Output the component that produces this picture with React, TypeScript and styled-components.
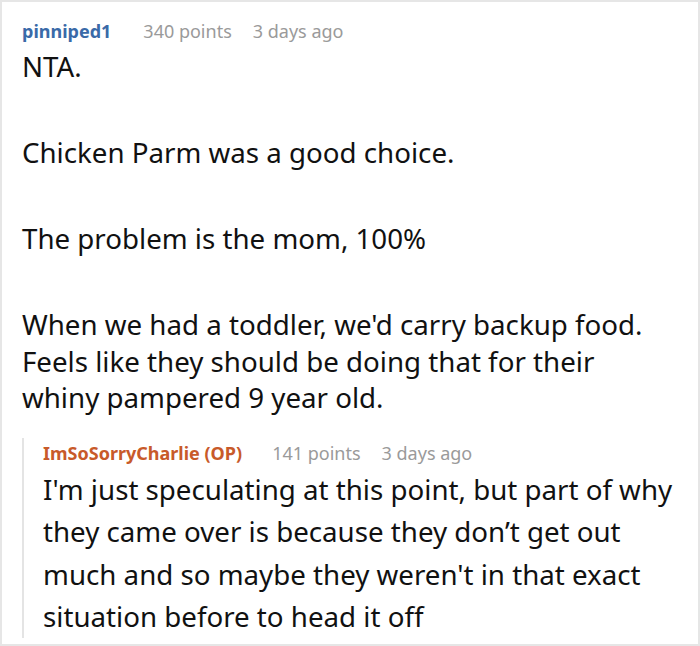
import styled, { createGlobalStyle } from 'styled-components'

const GlobalStyle = createGlobalStyle`
  html, body {
    margin: 0;
    padding: 0;
    background: #fff;
  }
`

const Frame = styled.div`
  box-sizing: border-box;
  width: 700px;
  height: 646px;
  border: 2px solid #e6e6e6;
  overflow: hidden;
  padding: 14px 14px 0 20px;
  font-family: 'Noto Sans', 'Open Sans', sans-serif;
  color: #111;
`

const Meta = styled.div`
  display: flex;
  align-items: baseline;
  font-size: 18px;
  line-height: 30px;
`

const Author = styled.span<{ $op?: boolean }>`
  font-weight: 700;
  margin-right: ${(p) => (p.$op ? 30 : 32)}px;
  color: ${(p) => (p.$op ? '#c85a2a' : '#3a6aa8')};
`

const Points = styled.span`
  color: #9a9a9a;
  margin-right: 21px;
`

const Age = styled.span`
  color: #9a9a9a;
`

const Body = styled.div<{ $line: number }>`
  font-size: 27.7px;
  line-height: ${(p) => p.$line}px;
  p {
    margin: 0 0 49.5px 0;
  }
  p:last-child {
    margin-bottom: 0;
  }
`

const TopBody = styled(Body)`
  margin-top: 2px;
  padding-right: 12px;
`

const Reply = styled.div`
  margin-top: 22px;
  border-left: 2px solid #e4e4e4;
  padding-left: 19px;
`

function Comment() {
  return (
    <Frame>
      <Meta>
        <Author>pinniped1</Author>
        <Points>340 points</Points>
        <Age>3 days ago</Age>
      </Meta>
      <TopBody $line={36.5}>
        <p>NTA.</p>
        <p>Chicken Parm was a good choice.</p>
        <p>The problem is the mom, 100%</p>
        <p>
          When we had a toddler, we'd carry backup food. Feels like they should
          be doing that for their whiny pampered 9 year old.
        </p>
      </TopBody>
      <Reply>
        <Meta>
          <Author $op>ImSoSorryCharlie (OP)</Author>
          <Points>141 points</Points>
          <Age>3 days ago</Age>
        </Meta>
        <Body $line={42.5}>
          <p>
            I'm just speculating at this point, but part of why they came over
            is because they don’t get out much and so maybe they weren't in that
            exact situation before to head it off
          </p>
        </Body>
      </Reply>
    </Frame>
  )
}

export default function App() {
  return (
    <>
      <GlobalStyle />
      <Comment />
    </>
  )
}
